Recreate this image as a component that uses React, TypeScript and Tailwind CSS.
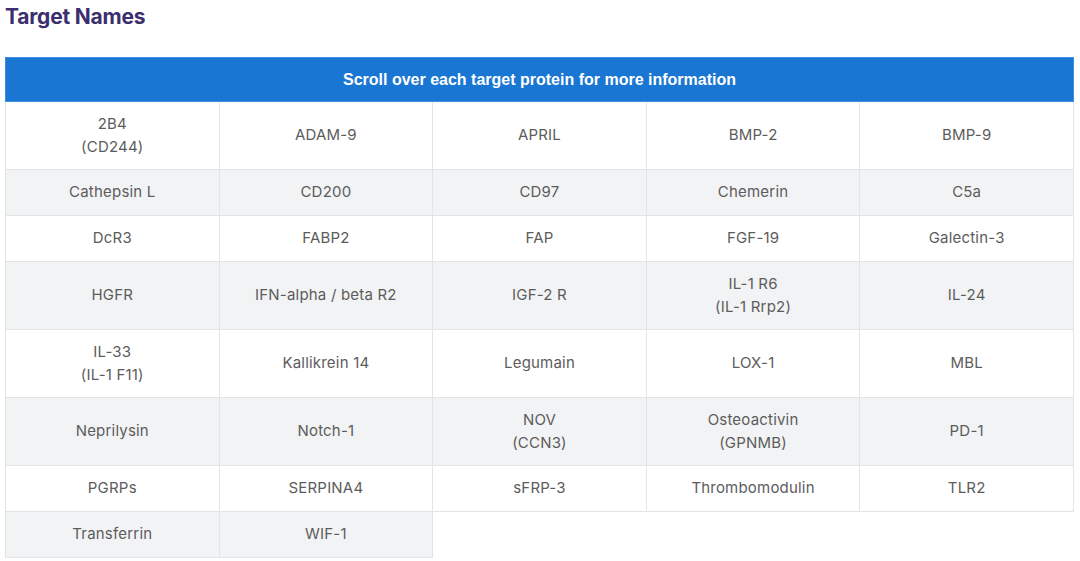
import React from "react";

const rows: string[][][] = [
  [["2B4", "(CD244)"], ["ADAM-9"], ["APRIL"], ["BMP-2"], ["BMP-9"]],
  [["Cathepsin L"], ["CD200"], ["CD97"], ["Chemerin"], ["C5a"]],
  [["DcR3"], ["FABP2"], ["FAP"], ["FGF-19"], ["Galectin-3"]],
  [["HGFR"], ["IFN-alpha / beta R2"], ["IGF-2 R"], ["IL-1 R6", "(IL-1 Rrp2)"], ["IL-24"]],
  [["IL-33", "(IL-1 F11)"], ["Kallikrein 14"], ["Legumain"], ["LOX-1"], ["MBL"]],
  [["Neprilysin"], ["Notch-1"], ["NOV", "(CCN3)"], ["Osteoactivin", "(GPNMB)"], ["PD-1"]],
  [["PGRPs"], ["SERPINA4"], ["sFRP-3"], ["Thrombomodulin"], ["TLR2"]],
  [["Transferrin"], ["WIF-1"]],
];

export default function App() {
  return (
    <div className="w-[1080px] h-[561px] bg-white overflow-hidden" style={{ fontFamily: "Inter, 'Noto Sans', sans-serif" }}>
      <h2 className="pl-[5px] pt-[5px] text-[21px] leading-[24px] font-bold text-[#3b2e6e] tracking-[-0.2px]">
        Target Names
      </h2>
      <table className="mt-[28px] ml-[5px] w-[1069px] table-fixed border-collapse">
        <thead>
          <tr>
            <th
              colSpan={5}
              className="h-[44px] bg-[#1976d2] border border-[#3d8de0] text-white text-[16px] font-bold text-center"
              style={{ fontFamily: "'Liberation Sans', Arial, sans-serif" }}
            >
              Scroll over each target protein for more information
            </th>
          </tr>
        </thead>
        <tbody>
          {rows.map((row, i) => {
            const dbl = row.some((c) => c.length > 1);
            return (
              <tr key={i} className={i % 2 === 1 ? "bg-[#f2f3f4]" : "bg-white"}>
                {row.map((cell, j) => (
                  <td
                    key={j}
                    className={`border border-[#e3e4e6] text-center text-[15px] leading-[22.5px] tracking-[0.2px] text-[#5c5c5c] px-2 py-0 align-middle ${dbl ? "h-[68px]" : "h-[46px]"}`}
                  >
                    {cell.map((line, k) => (
                      <div key={k}>{line}</div>
                    ))}
                  </td>
                ))}
              </tr>
            );
          })}
        </tbody>
      </table>
    </div>
  );
}
